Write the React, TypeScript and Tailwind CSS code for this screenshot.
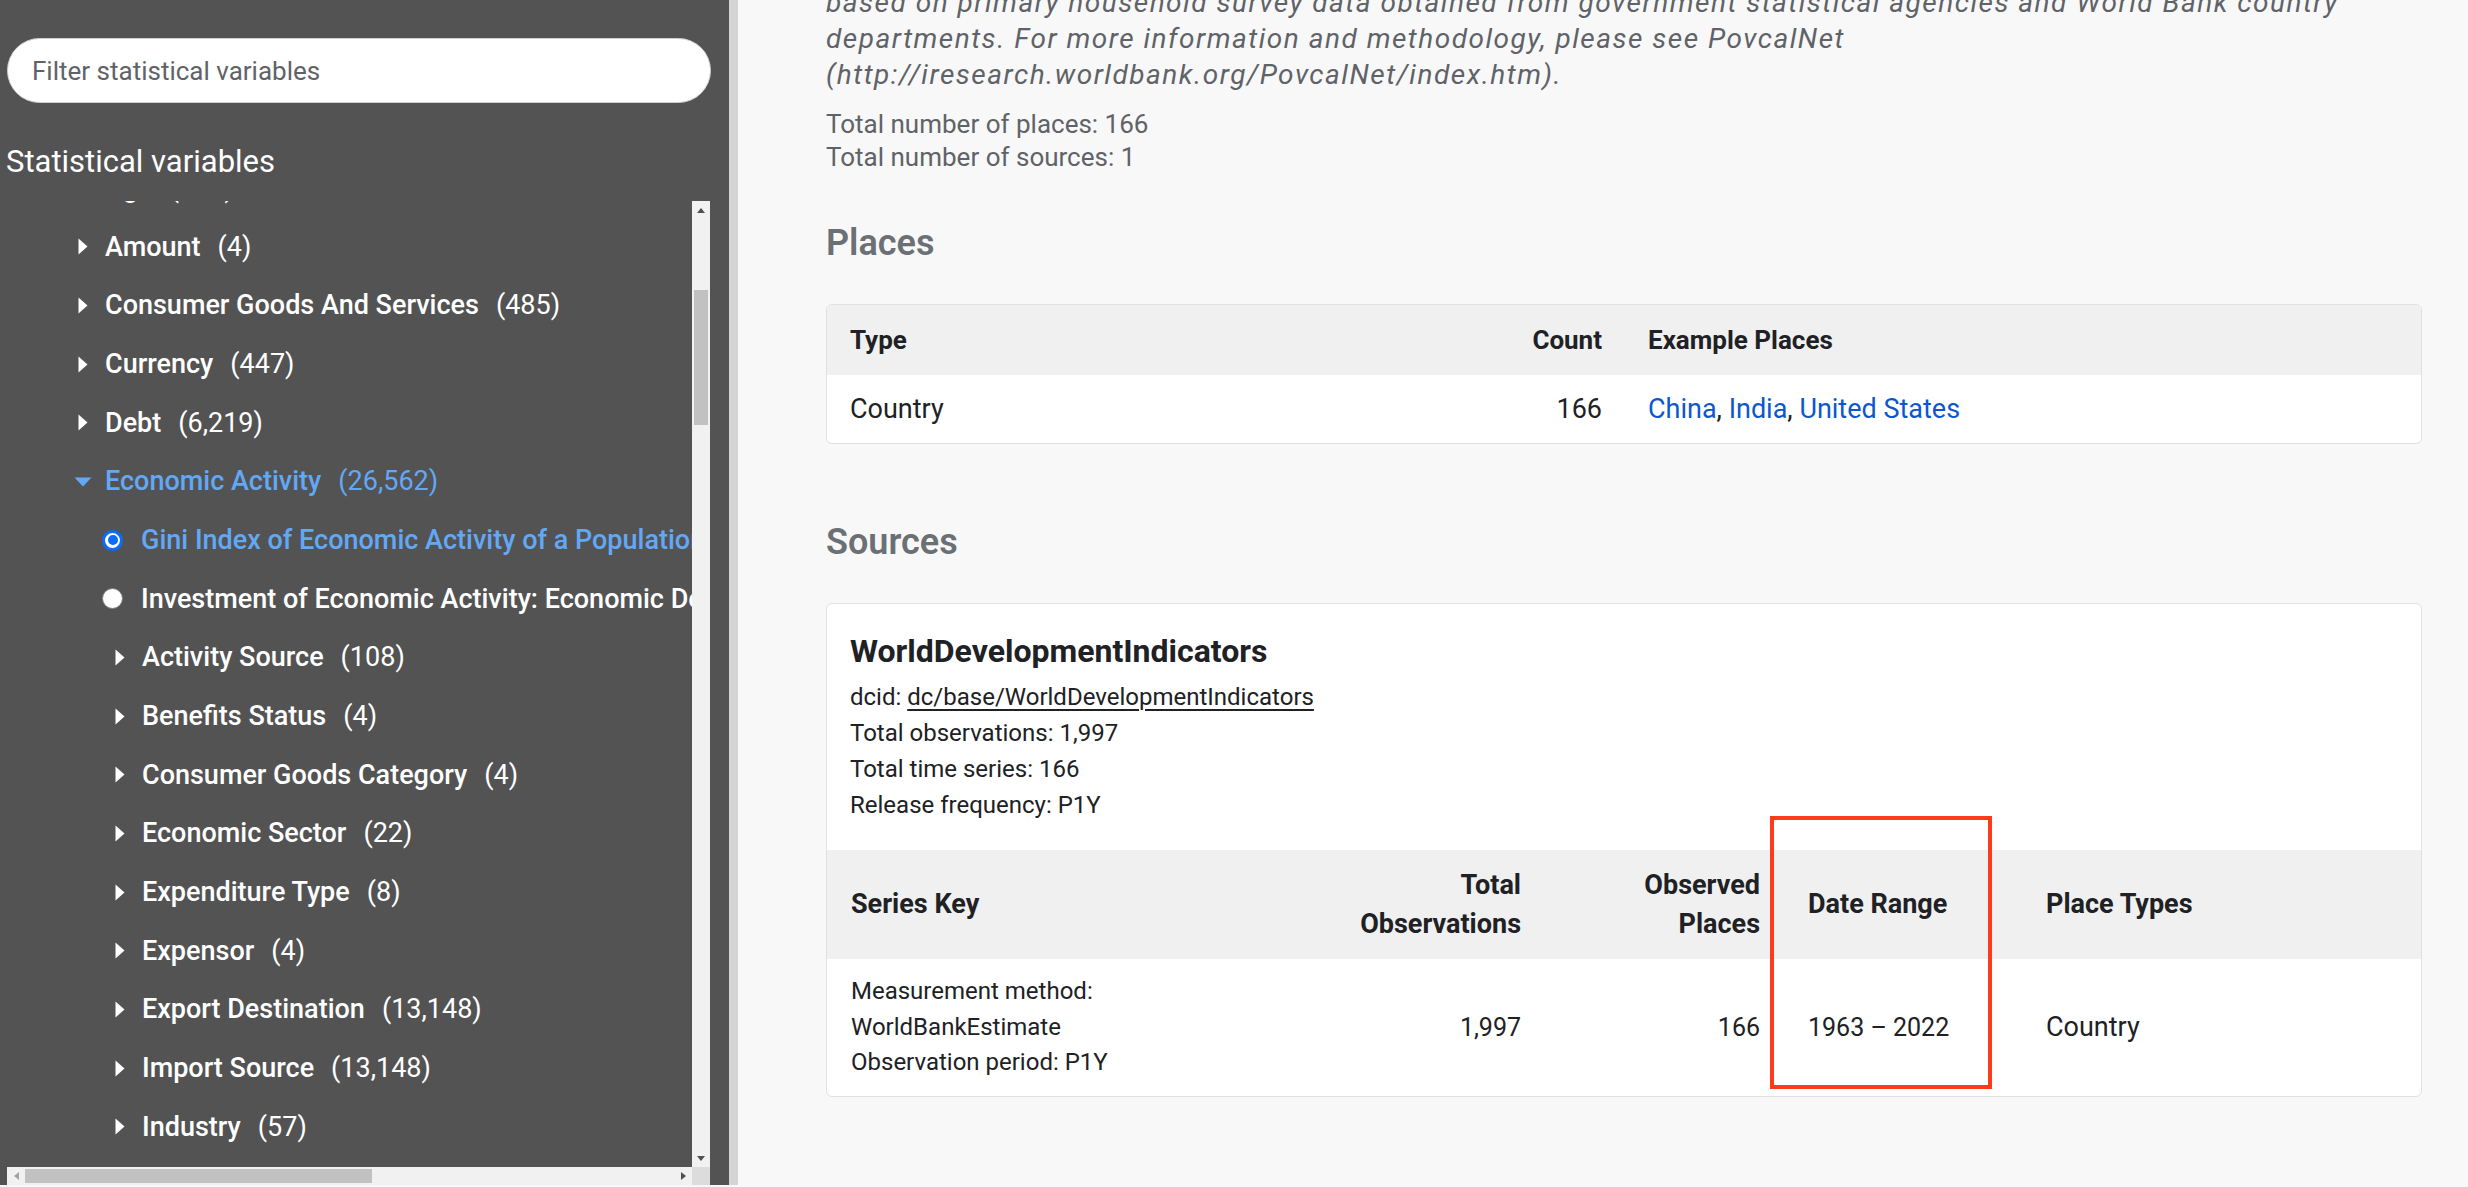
import React from "react";

type TreeRow =
  | { kind: "node"; level: 1 | 2; label: string; count: string; open?: boolean; active?: boolean }
  | { kind: "leaf"; label: string; selected?: boolean };

const rows: TreeRow[] = [
  { kind: "node", level: 1, label: "Age", count: "354" },
  { kind: "node", level: 1, label: "Amount", count: "4" },
  { kind: "node", level: 1, label: "Consumer Goods And Services", count: "485" },
  { kind: "node", level: 1, label: "Currency", count: "447" },
  { kind: "node", level: 1, label: "Debt", count: "6,219" },
  { kind: "node", level: 1, label: "Economic Activity", count: "26,562", open: true, active: true },
  { kind: "leaf", label: "Gini Index of Economic Activity of a Population", selected: true },
  { kind: "leaf", label: "Investment of Economic Activity: Economic Development Assistance" },
  { kind: "node", level: 2, label: "Activity Source", count: "108" },
  { kind: "node", level: 2, label: "Benefits Status", count: "4" },
  { kind: "node", level: 2, label: "Consumer Goods Category", count: "4" },
  { kind: "node", level: 2, label: "Economic Sector", count: "22" },
  { kind: "node", level: 2, label: "Expenditure Type", count: "8" },
  { kind: "node", level: 2, label: "Expensor", count: "4" },
  { kind: "node", level: 2, label: "Export Destination", count: "13,148" },
  { kind: "node", level: 2, label: "Import Source", count: "13,148" },
  { kind: "node", level: 2, label: "Industry", count: "57" },
  { kind: "node", level: 2, label: "Institution Type", count: "12" },
];

function CaretRight() {
  return (
    <svg width="10" height="17" viewBox="0 0 10 17" className="block">
      <path d="M0.5 0.5 L9.5 8.5 L0.5 16.5 Z" fill="currentColor" />
    </svg>
  );
}

function CaretDown() {
  return (
    <svg width="18" height="10" viewBox="0 0 18 10" className="block">
      <path d="M0.5 0.5 H17.5 L9 9.5 Z" fill="currentColor" />
    </svg>
  );
}

function Row({ row }: { row: TreeRow }) {
  if (row.kind === "leaf") {
    return (
      <div className="flex items-center h-[58.66px] whitespace-nowrap pl-[95px]">
        {row.selected ? (
          <span className="w-[21px] h-[21px] shrink-0 rounded-full border-[3px] border-[#0b6cf7] bg-white flex items-center justify-center">
            <span className="w-[10px] h-[10px] rounded-full bg-[#0b6cf7]" />
          </span>
        ) : (
          <span className="w-[21px] h-[21px] shrink-0 rounded-full border-[1.5px] border-[#7a7a7a] bg-white" />
        )}
        <span
          className={
            row.selected
              ? "ml-[18px] font-medium text-[#62a8f5]"
              : "ml-[18px] font-medium text-white"
          }
        >
          {row.label}
        </span>
      </div>
    );
  }
  const color = row.active ? "text-[#62a8f5]" : "text-white";
  return (
    <div
      className={
        row.level === 1
          ? `flex items-center h-[58.66px] whitespace-nowrap pl-[67px] ${color}`
          : `flex items-center h-[58.66px] whitespace-nowrap pl-[104px] ${color}`
      }
    >
      <span className="w-[18px] shrink-0 flex justify-center">
        {row.open ? <CaretDown /> : <CaretRight />}
      </span>
      <span className="ml-[13px] font-medium">{row.label}</span>
      <span className="ml-[17px]">({row.count})</span>
    </div>
  );
}

function Sidebar() {
  return (
    <aside className="w-[729px] h-[1185px] shrink-0 bg-[#535353] flex flex-col">
      <div className="mt-[38px] ml-[7px] mr-[18px]">
        <input
          className="w-full h-[65px] rounded-full bg-white border border-[#cfcfcf] pl-[24px] text-[26px] text-[#202124] placeholder:text-[#5f6368] outline-none"
          placeholder="Filter statistical variables"
        />
      </div>
      <h2 className="mt-[41px] ml-[6px] text-[31px] leading-[36px] text-white">Statistical variables</h2>
      <div className="mt-[21px] ml-[7px] mr-[19px] flex-1 min-h-0 flex flex-col">
        <div className="flex flex-1 min-h-0">
          <div className="flex-1 min-w-0 overflow-hidden text-[27px]">
            <div className="-mt-[42px]">
              {rows.map((r, i) => (
                <Row key={i} row={r} />
              ))}
            </div>
          </div>
          {/* vertical scrollbar */}
          <div className="w-[18px] shrink-0 bg-[#f1f1f1] flex flex-col">
            <div className="h-[18px] flex items-center justify-center">
              <svg width="8" height="5" viewBox="0 0 8 5">
                <path d="M0 5 L4 0 L8 5 Z" fill="#505050" />
              </svg>
            </div>
            <div className="h-[71px]" />
            <div className="h-[135px] mx-[2px] bg-[#c1c1c1]" />
            <div className="flex-1" />
            <div className="h-[18px] flex items-center justify-center">
              <svg width="8" height="5" viewBox="0 0 8 5">
                <path d="M0 0 L8 0 L4 5 Z" fill="#505050" />
              </svg>
            </div>
          </div>
        </div>
        {/* horizontal scrollbar */}
        <div className="h-[18px] flex shrink-0">
          <div className="flex-1 bg-[#f1f1f1] flex items-center">
            <div className="w-[18px] h-[18px] flex items-center justify-center">
              <svg width="5" height="8" viewBox="0 0 5 8">
                <path d="M5 0 L0 4 L5 8 Z" fill="#a3a3a3" />
              </svg>
            </div>
            <div className="w-[347px] h-[14px] bg-[#c1c1c1]" />
            <div className="flex-1" />
            <div className="w-[18px] h-[18px] flex items-center justify-center">
              <svg width="5" height="8" viewBox="0 0 5 8">
                <path d="M0 0 L5 4 L0 8 Z" fill="#505050" />
              </svg>
            </div>
          </div>
          <div className="w-[18px] bg-[#dcdcdc]" />
        </div>
      </div>
    </aside>
  );
}

function Main() {
  return (
    <main className="flex-1 min-w-0 h-[1187px] bg-[#f8f8f8] pl-[88px] pr-[46px] overflow-hidden">
      <p className="-mt-[15px] text-[28px] leading-[36px] tracking-[1.5px] italic text-[#5f6368] whitespace-nowrap">
        based on primary household survey data obtained from government statistical agencies and World Bank country
        <br />
        departments. For more information and methodology, please see PovcalNet
        <br />
        (http://iresearch.worldbank.org/PovcalNet/index.htm).
      </p>
      <div className="mt-[15px] text-[26px] leading-[33px] text-[#5f6368]">
        <div>Total number of places: 166</div>
        <div>Total number of sources: 1</div>
      </div>

      <h2 className="mt-[48px] text-[36px] leading-[42px] font-semibold text-[#6b7075]">Places</h2>
      <div className="mt-[40px] rounded-[6px] border border-[#e0e0e0] bg-white overflow-hidden text-[#202124]">
        <div className="grid grid-cols-[1fr_200px_796px] h-[70px] items-center bg-[#f0f0f0] text-[26px] font-bold">
          <div className="px-[23px]">Type</div>
          <div className="px-[23px] text-right">Count</div>
          <div className="px-[23px]">Example Places</div>
        </div>
        <div className="grid grid-cols-[1fr_200px_796px] h-[68px] items-center text-[27px]">
          <div className="px-[23px]">Country</div>
          <div className="px-[23px] text-right">166</div>
          <div className="px-[23px]">
            <a className="text-[#0b57d0]">China</a>, <a className="text-[#0b57d0]">India</a>,{" "}
            <a className="text-[#0b57d0]">United States</a>
          </div>
        </div>
      </div>

      <h2 className="mt-[77px] text-[36px] leading-[42px] font-semibold text-[#6b7075]">Sources</h2>
      <div className="relative mt-[40px] rounded-[6px] border border-[#e0e0e0] bg-white text-[#202124]">
        <div className="px-[23px] pt-[29px]">
          <div className="text-[32px] leading-[36px] font-bold">WorldDevelopmentIndicators</div>
          <div className="mt-[10px] text-[24px] leading-[36px]">
            <div>
              dcid:{" "}
              <a className="underline decoration-[1.5px] underline-offset-[4px]">dc/base/WorldDevelopmentIndicators</a>
            </div>
            <div>Total observations: 1,997</div>
            <div>Total time series: 166</div>
            <div>Release frequency: P1Y</div>
          </div>
        </div>
        <div className="mt-[27px] grid grid-cols-[1fr_220px_239px_238px_399px] h-[109px] items-center bg-[#f0f0f0] text-[27px] leading-[39px] font-bold">
          <div className="px-[24px]">Series Key</div>
          <div className="px-[24px] text-right">
            Total
            <br />
            Observations
          </div>
          <div className="px-[24px] text-right">
            Observed
            <br />
            Places
          </div>
          <div className="px-[24px]">Date Range</div>
          <div className="px-[24px]">Place Types</div>
        </div>
        <div className="grid grid-cols-[1fr_220px_239px_238px_399px] h-[137px] items-center text-[25px] leading-[35.5px]">
          <div className="px-[24px] text-[24px]">
            Measurement method:
            <br />
            WorldBankEstimate
            <br />
            Observation period: P1Y
          </div>
          <div className="px-[24px] text-right">1,997</div>
          <div className="px-[24px] text-right">166</div>
          <div className="px-[24px]">1963 – 2022</div>
          <div className="px-[24px] text-[27px]">Country</div>
        </div>
        <div className="absolute left-[943px] top-[212px] w-[222px] h-[273px] border-[4px] border-[#ff3b1a] pointer-events-none" />
      </div>
    </main>
  );
}

export default function App() {
  return (
    <div className="flex w-[2468px] h-[1187px] bg-[#f8f8f8] overflow-hidden font-[Roboto,'Liberation_Sans',sans-serif]">
      <Sidebar />
      <div className="w-[9px] h-[1185px] shrink-0 bg-[#d4d4d4]" />
      <Main />
    </div>
  );
}
